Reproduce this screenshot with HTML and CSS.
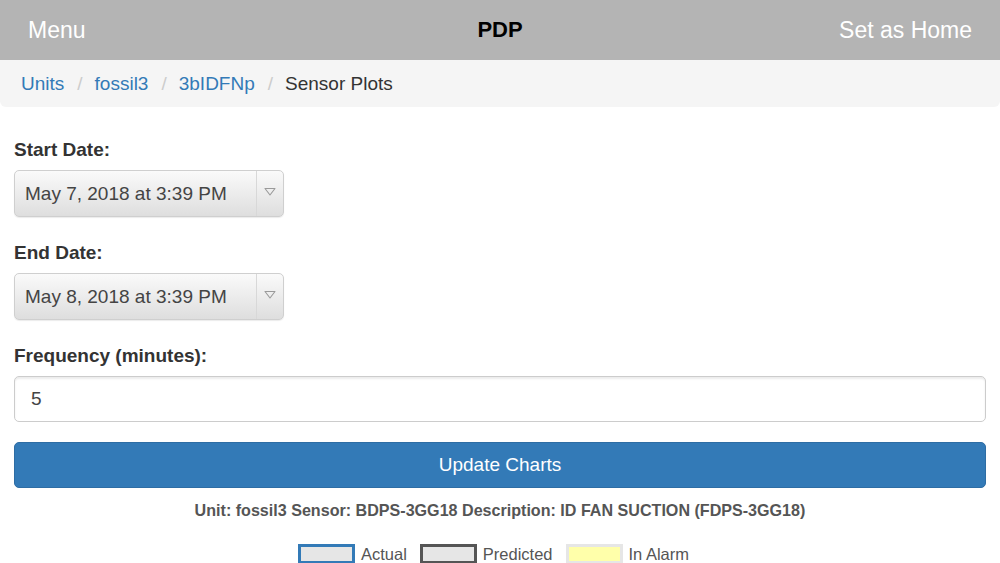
FILE: index.html
```html
<!DOCTYPE html>
<html>
<head>
<meta charset="utf-8">
<link rel="stylesheet" href="styles.css">
</head>
<body>
<header class="topbar">
  <span class="topbar-link">Menu</span>
  <span class="topbar-title">PDP</span>
  <span class="topbar-link topbar-right">Set as Home</span>
</header>
<nav class="crumbs">
  <a class="crumb">Units</a><span class="sep">/</span>
  <a class="crumb">fossil3</a><span class="sep">/</span>
  <a class="crumb">3bIDFNp</a><span class="sep">/</span>
  <span class="crumb-active">Sensor Plots</span>
</nav>
<main class="form">
  <div class="field">
    <label class="label">Start Date:</label>
    <div class="select">
      <span class="select-value">May 7, 2018 at 3:39 PM</span>
      <span class="select-arrow"><svg width="12" height="9" viewBox="0 0 12 9"><path d="M1 1.5 L11 1.5 L6 8 Z" fill="none" stroke="#9a9a9a" stroke-width="1.1" stroke-linejoin="round"/></svg></span>
    </div>
  </div>
  <div class="field">
    <label class="label">End Date:</label>
    <div class="select">
      <span class="select-value">May 8, 2018 at 3:39 PM</span>
      <span class="select-arrow"><svg width="12" height="9" viewBox="0 0 12 9"><path d="M1 1.5 L11 1.5 L6 8 Z" fill="none" stroke="#9a9a9a" stroke-width="1.1" stroke-linejoin="round"/></svg></span>
    </div>
  </div>
  <div class="field field-last">
    <label class="label">Frequency (minutes):</label>
    <div class="input">5</div>
  </div>
  <div class="button">Update Charts</div>
  <p class="info">Unit: fossil3 Sensor: BDPS-3GG18 Description: ID FAN SUCTION (FDPS-3GG18)</p>
  <div class="legend">
    <span class="swatch swatch-actual"></span><span class="legend-text">Actual</span>
    <span class="swatch swatch-pred"></span><span class="legend-text">Predicted</span>
    <span class="swatch swatch-alarm"></span><span class="legend-text">In Alarm</span>
  </div>
</main>
</body>
</html>
```
FILE: styles.css
```css
html, body {
  margin: 0;
  padding: 0;
  background: #fff;
  font-family: "Liberation Sans", Arial, sans-serif;
  overflow: hidden;
}
.topbar {
  height: 60px;
  background: #b4b4b4;
  display: grid;
  grid-template-columns: 1fr auto 1fr;
  align-items: center;
  padding: 0 28px;
}
.topbar-link {
  color: #fff;
  font-size: 23px;
}
.topbar-right {
  text-align: right;
}
.topbar-title {
  color: #000;
  font-size: 22px;
  font-weight: bold;
}
.crumbs {
  height: 47px;
  background: #f5f5f5;
  border-radius: 0 0 6px 6px;
  display: flex;
  align-items: center;
  padding: 0 21px;
  font-size: 19px;
}
.crumb {
  color: #337ab7;
}
.sep {
  color: #ccc;
  margin: 0 12px 0 13px;
}
.crumb-active {
  color: #333;
}
.form {
  padding: 32px 14px 0;
  display: flex;
  flex-direction: column;
}
.field {
  display: flex;
  flex-direction: column;
  margin-bottom: 25px;
}
.field-last {
  margin-bottom: 20px;
}
.label {
  font-size: 19px;
  font-weight: bold;
  color: #333;
  line-height: 22px;
  margin-bottom: 9px;
}
.select {
  width: 268px;
  height: 45px;
  border: 1px solid #cfcfcf;
  border-radius: 5px;
  background: linear-gradient(#fafafa, #dedede);
  display: flex;
  align-items: center;
  box-shadow: 0 1px 1px rgba(0,0,0,0.08);
}
.select-value {
  flex: 1;
  padding-left: 10px;
  font-size: 19px;
  color: #444;
}
.select-arrow {
  width: 27px;
  height: 100%;
  border-left: 1px solid #d8d8d8;
  display: flex;
  justify-content: center;
  padding-top: 16px;
  box-sizing: border-box;
}
.input {
  height: 44px;
  border: 1px solid #ccc;
  border-radius: 5px;
  box-shadow: inset 0 2px 2px rgba(0,0,0,0.08);
  display: flex;
  align-items: center;
  padding-left: 16px;
  font-size: 19px;
  color: #444;
}
.button {
  height: 44px;
  background: #337ab7;
  border: 1px solid #2e6da4;
  border-radius: 5px;
  color: #fff;
  font-size: 19px;
  display: flex;
  align-items: center;
  justify-content: center;
}
.info {
  margin: 12px 0 0;
  text-align: center;
  font-size: 16.1px;
  font-weight: bold;
  color: #555;
  line-height: 20px;
}
.legend {
  margin-top: 23px;
  display: flex;
  justify-content: center;
  align-items: center;
}
.swatch {
  width: 51px;
  height: 14px;
  border: 3px solid;
  background: #e6e6e6;
  margin-right: 6px;
}
.swatch-actual { border-color: #337ab7; }
.swatch-pred { border-color: #555; }
.swatch-alarm { border-color: #e6e6e6; background: #ffffaa; }
.legend-text {
  font-size: 16.5px;
  color: #555;
  margin-right: 13px;
  padding-top: 2px;
}
```
